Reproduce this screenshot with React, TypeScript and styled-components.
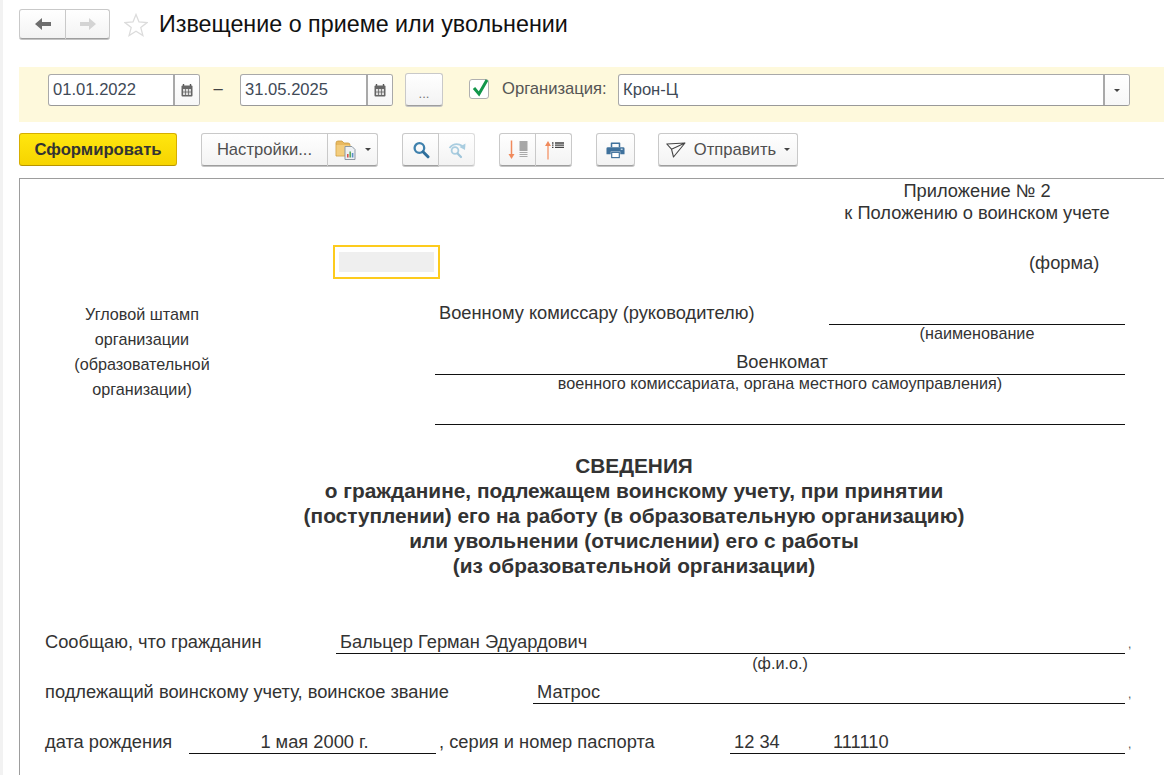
import { createGlobalStyle, styled } from "styled-components";

const GlobalStyle = createGlobalStyle`
  html, body {
    margin: 0;
    padding: 0;
    background: #fff;
  }
  body {
    font-family: "Liberation Sans", Arial, sans-serif;
  }
`;

const Page = styled.div`
  box-sizing: border-box;
  width: 1164px;
  height: 775px;
  overflow: hidden;
  border-left: 3px solid #f2f2f2;
  padding-left: 16px;
  background: #fff;
`;

const TitleBar = styled.header`
  display: flex;
  align-items: flex-start;
  height: 67px;
  padding-top: 9px;
  box-sizing: border-box;
`;

const ButtonFace = styled.button<{ $w: number; $joinLeft?: boolean; $joinRight?: boolean; $faded?: boolean }>`
  box-sizing: border-box;
  width: ${(p) => p.$w}px;
  height: 100%;
  padding: 0;
  display: flex;
  align-items: center;
  justify-content: center;
  font: inherit;
  color: #4a4a4a;
  background: linear-gradient(#fff, #f3f3f3);
  border: 1px solid ${(p) => (p.$faded ? "#dcdcdc" : "#c9c9c9")};
  border-bottom-color: ${(p) => (p.$faded ? "#c4c4c4" : "#9e9e9e")};
  border-left-width: ${(p) => (p.$joinLeft ? 0 : 1)}px;
  border-radius: ${(p) => (p.$joinLeft ? 0 : 3)}px ${(p) => (p.$joinRight ? 0 : 3)}px ${(p) => (p.$joinRight ? 0 : 3)}px ${(p) => (p.$joinLeft ? 0 : 3)}px;
  box-shadow: 0 1px 0 ${(p) => (p.$faded ? "#e2e2e2" : "#c4c4c4")};
`;

const Group = styled.div<{ $h?: number; $left?: number }>`
  display: flex;
  height: ${(p) => p.$h ?? 33}px;
  margin-left: ${(p) => p.$left ?? 0}px;
  flex: none;
`;

const StarSlot = styled.span`
  margin: 4px 11px 0 14px;
  display: flex;
`;

const Title = styled.h1`
  margin: 0;
  font-size: 23.3px;
  font-weight: 400;
  line-height: 31px;
  color: #111;
  white-space: nowrap;
`;

const FilterBar = styled.section`
  box-sizing: border-box;
  height: 55px;
  padding: 7px 0 0 29px;
  display: flex;
  align-items: flex-start;
  background: #fef9dc;
`;

const Field = styled.div<{ $w: number }>`
  box-sizing: border-box;
  width: ${(p) => p.$w}px;
  height: 32px;
  display: flex;
  flex: none;
  background: #fff;
  border: 1px solid #a9a9a9;
  border-bottom-color: #999;
  border-radius: 3px;
  overflow: hidden;
`;

const FieldText = styled.span`
  flex: 1;
  padding-left: 4px;
  font-size: 16.6px;
  line-height: 29px;
  color: #3f4a57;
  white-space: nowrap;
`;

const FieldButton = styled.span<{ $w: number }>`
  box-sizing: border-box;
  width: ${(p) => p.$w}px;
  display: flex;
  align-items: center;
  justify-content: center;
  border-left: 2px solid #a9a9a9;
  background: linear-gradient(#fff, #f7f7f7);
`;

const Dash = styled.span`
  box-sizing: border-box;
  width: 40px;
  padding-right: 4px;
  flex: none;
  text-align: center;
  font-size: 16.6px;
  line-height: 30px;
  color: #444;
`;

const EllipsisButton = styled.div`
  box-sizing: border-box;
  width: 38px;
  height: 33px;
  margin: -1px 0 0 12px;
  flex: none;
  padding-top: 10px;
  text-align: center;
  font-size: 13px;
  line-height: 20px;
  color: #777;
  background: linear-gradient(#fff, #f3f3f3);
  border: 1px solid #c9c9c9;
  border-bottom-color: #9e9e9e;
  border-radius: 3px;
  box-shadow: 0 1px 0 #c4c4c4;
`;

const CheckBox = styled.span`
  box-sizing: border-box;
  width: 20px;
  height: 20px;
  margin: 5px 0 0 26px;
  flex: none;
  position: relative;
  background: #fff;
  border: 1px solid #b0b0b0;
  border-radius: 3px;
`;

const CheckMark = styled.svg`
  position: absolute;
  left: 1px;
  top: -5px;
`;

const FilterLabel = styled.span`
  margin-left: 13px;
  width: 116px;
  flex: none;
  font-size: 16.6px;
  line-height: 29px;
  color: #555;
  white-space: nowrap;
`;

const ToolBar = styled.nav`
  display: flex;
  height: 33px;
  margin-top: 11px;
`;

const PrimaryButton = styled.button`
  box-sizing: border-box;
  width: 158px;
  height: 33px;
  padding: 0;
  flex: none;
  font: inherit;
  font-size: 16.7px;
  font-weight: 700;
  color: #333;
  background: linear-gradient(#ffe60f, #f6d400);
  border: 1px solid #d6ae00;
  border-bottom-color: #b79400;
  border-radius: 3px;
`;

const ButtonLabel = styled.span`
  font-size: 16.6px;
  color: #4f4f4f;
  white-space: nowrap;
`;

const Caret = styled.i`
  display: inline-block;
  width: 0;
  height: 0;
  border: 3px solid transparent;
  border-top: 3px solid #444;
  border-bottom: 0;
`;

const Doc = styled.main`
  margin-top: 12px;
  height: 597px;
  box-sizing: border-box;
  border-top: 1px solid #9d9d9d;
  border-left: 1px solid #9d9d9d;
  color: #333;
  font-size: 18.3px;
`;

const AppendixBlock = styled.div`
  width: 266px;
  margin: 1px 0 0 824px;
  text-align: center;
  line-height: 22px;
  white-space: nowrap;
`;

const StampRow = styled.div`
  display: flex;
  align-items: center;
  height: 34px;
  margin-top: 21px;
  padding-left: 313px;
`;

const StampCell = styled.div`
  box-sizing: border-box;
  width: 107px;
  height: 34px;
  padding: 5px 4px 5px 4px;
  flex: none;
  border: 2px solid #fdcb1d;
`;

const StampFill = styled.div`
  height: 100%;
  background: #efefef;
`;

const FormLabel = styled.span`
  margin: 2px 0 0 589px;
`;

const AddressGrid = styled.div`
  display: grid;
  grid-template-columns: 415px 690px;
  margin-top: 21px;
`;

const StampNote = styled.div`
  width: 244px;
  padding-top: 2px;
  text-align: center;
  font-size: 16.2px;
  line-height: 25px;
`;

const AddressRow = styled.div<{ $h: number; $rule?: boolean }>`
  display: flex;
  align-items: flex-end;
  justify-content: center;
  height: ${(p) => p.$h}px;
  box-sizing: border-box;
  padding: 0 0 1px 4px;
  border-bottom: ${(p) => (p.$rule ? "1px solid #111" : "0")};
  white-space: nowrap;
`;

const AddresseeRow = styled.div`
  display: flex;
  height: 25px;
  white-space: nowrap;
`;

const Addressee = styled.span`
  width: 394px;
  padding-left: 4px;
  box-sizing: border-box;
  flex: none;
  line-height: 26px;
`;

const AddresseeRule = styled.span`
  flex: 1;
  border-bottom: 1px solid #111;
`;

const HintLine = styled.div<{ $pad?: number }>`
  font-size: 16.2px;
  line-height: 17px;
  height: 17px;
  text-align: center;
  padding-left: ${(p) => p.$pad ?? 0}px;
  white-space: nowrap;
`;

const Heading = styled.h2`
  width: 800px;
  margin: 28px 0 0 214px;
  text-align: center;
  font-size: 20.84px;
  font-weight: 700;
  line-height: 25px;
  white-space: nowrap;
`;

const FormRow = styled.div<{ $top?: number; $h?: number }>`
  display: flex;
  align-items: flex-end;
  height: ${(p) => p.$h ?? 30}px;
  margin-top: ${(p) => p.$top ?? 0}px;
  padding-left: 25px;
  white-space: nowrap;
`;

const FormLabelText = styled.span<{ $w: number; $pad?: number }>`
  box-sizing: border-box;
  width: ${(p) => p.$w}px;
  padding-left: ${(p) => p.$pad ?? 0}px;
  flex: none;
  line-height: 24px;
`;

const Blank = styled.span<{ $w: number; $center?: boolean }>`
  box-sizing: border-box;
  width: ${(p) => p.$w}px;
  flex: none;
  height: 25px;
  padding-left: 4px;
  display: flex;
  justify-content: ${(p) => (p.$center ? "center" : "flex-start")};
  line-height: 26px;
  border-bottom: 1px solid #111;
`;

const Comma = styled.span`
  margin-left: 3px;
  font-size: 12px;
  line-height: 19px;
  color: #555;
`;

const NumberPart = styled.span<{ $w: number }>`
  width: ${(p) => p.$w}px;
  flex: none;
`;

const FioHint = styled.div`
  width: 112px;
  margin-left: 704px;
  height: 20px;
  text-align: center;
  font-size: 16.2px;
  line-height: 18px;
`;

const GapIcon = styled.span`
  display: flex;
  align-items: center;
  gap: 8px;
`;

function ArrowIcon({ dir, color }: { dir: "left" | "right"; color: string }) {
  return (
    <svg width="18" height="14" viewBox="0 0 18 14">
      <path
        transform={dir === "right" ? "translate(18 0) scale(-1 1)" : undefined}
        d="M1 7 L8 1 V5 H17 V9 H8 V13 Z"
        fill={color}
      />
    </svg>
  );
}

function StarIcon() {
  return (
    <svg width="24" height="24" viewBox="0 0 24 24">
      <path
        d="M12 1.5 L15 9 L23 9.6 L16.8 14.6 L18.9 22.5 L12 18.2 L5.1 22.5 L7.2 14.6 L1 9.6 L9 9 Z"
        fill="#fff"
        stroke="#dcdcdc"
        strokeWidth="1.3"
      />
    </svg>
  );
}

function CalendarIcon() {
  return (
    <svg width="12" height="13" viewBox="0 0 12 13">
      <path d="M2.5 0 V2 M9.5 0 V2" stroke="#555" strokeWidth="1.4" />
      <rect x="0.5" y="1.5" width="11" height="11" rx="1" fill="#666" />
      <rect x="2" y="5" width="8" height="6" fill="#ddd" />
      <path d="M4.5 5 V11 M7.5 5 V11 M2 8 H10" stroke="#666" strokeWidth="0.8" />
    </svg>
  );
}

function ReportFolderIcon() {
  return (
    <svg width="22" height="22" viewBox="0 0 22 22">
      <path d="M1 4 Q1 2 3 2 H7 L9 4 H13 Q15 4 15 6 V17 H1 Z" fill="#e9b95f" stroke="#c99a3e" strokeWidth="0.8" />
      <rect x="1.5" y="6" width="13" height="10.5" fill="#f3cd7e" />
      <path d="M10 7.5 H17 L20 10.5 V20.5 H10 Z" fill="#eef1f4" stroke="#8d98a3" strokeWidth="1" />
      <rect x="12" y="15" width="1.6" height="3.5" fill="#d9534f" />
      <rect x="14.4" y="12.5" width="1.6" height="6" fill="#5cab62" />
      <rect x="16.8" y="14" width="1.6" height="4.5" fill="#5b8fc9" />
    </svg>
  );
}

function SearchIcon() {
  return (
    <svg width="18" height="18" viewBox="0 0 18 18">
      <circle cx="7.4" cy="7" r="4.8" fill="none" stroke="#3f81ad" strokeWidth="2.3" />
      <path d="M11 10.8 L16 15.8" stroke="#2f6f9c" strokeWidth="3" strokeLinecap="round" />
    </svg>
  );
}

function SearchNextIcon() {
  return (
    <svg width="20" height="18" viewBox="0 0 20 18">
      <circle cx="8" cy="9.5" r="3.4" fill="none" stroke="#a9cde0" strokeWidth="1.8" />
      <path d="M10.6 12.4 L14 16" stroke="#9fc5da" strokeWidth="2.2" strokeLinecap="round" />
      <path d="M2.5 7 Q8 0.5 15.5 5" fill="none" stroke="#a9cde0" strokeWidth="1.8" />
      <path d="M18.5 2.5 L18 9 L12.5 6 Z" fill="#a9cde0" />
    </svg>
  );
}

function ExpandIcon() {
  return (
    <svg width="20" height="20" viewBox="0 0 20 20">
      <path d="M3.5 0.5 V15" stroke="#f08a5c" strokeWidth="1.5" />
      <path d="M0.5 14 H6.5 L3.5 19 Z" fill="#f08a5c" />
      <path d="M11.5 2 H19.5 M11.5 4 H19.5 M11.5 6 H19.5 M11.5 8 H19.5 M11.5 10 H19.5" stroke="#555" strokeWidth="1.1" />
      <path d="M11.5 12.5 H19.5 M11.5 14.5 H19.5 M11.5 16.5 H19.5" stroke="#aaa" strokeWidth="1.1" />
    </svg>
  );
}

function CollapseIcon() {
  return (
    <svg width="20" height="20" viewBox="0 0 20 20">
      <path d="M4 5 V19.5" stroke="#f5a07a" strokeWidth="1.5" />
      <path d="M1 6 H7 L4 1 Z" fill="#f08a5c" />
      <path d="M8 3 H9.5 M11 3 H20 M8 5.2 H9.5 M11 5.2 H20 M8 7.4 H9.5 M11 7.4 H20" stroke="#444" strokeWidth="1.3" />
    </svg>
  );
}

function PrinterIcon() {
  return (
    <svg width="19" height="18" viewBox="0 0 20 18">
      <path d="M5 6 V1.5 Q5 1 5.5 1 H14.5 Q15 1 15 1.5 V6 H13.4 V2.6 H6.6 V6 Z" fill="#3f719c" />
      <path d="M2 6 H18 Q19.5 6 19.5 7.5 V13.5 H15 V10.5 H5 V13.5 H0.5 V7.5 Q0.5 6 2 6 Z" fill="#3f719c" />
      <rect x="6" y="11.5" width="8" height="5.5" fill="#fff" stroke="#3f719c" strokeWidth="1.2" />
      <rect x="15.5" y="7.5" width="2" height="1.4" fill="#cfe0ec" />
    </svg>
  );
}

function SendIcon() {
  return (
    <svg width="20" height="16" viewBox="0 0 20 16">
      <path d="M0.8 2 L19 1 L7.5 15 L5.5 7.2 Z M5.5 7.2 L19 1" fill="none" stroke="#444" strokeWidth="1.1" strokeLinejoin="round" />
    </svg>
  );
}

export default function App() {
  return (
    <>
      <GlobalStyle />
      <Page>
        <TitleBar>
          <Group $h={30}>
            <ButtonFace $w={47} $joinRight>
              <ArrowIcon dir="left" color="#6e6e6e" />
            </ButtonFace>
            <ButtonFace $w={44} $joinLeft>
              <ArrowIcon dir="right" color="#d4d4d4" />
            </ButtonFace>
          </Group>
          <StarSlot>
            <StarIcon />
          </StarSlot>
          <Title>Извещение о приеме или увольнении</Title>
        </TitleBar>

        <FilterBar>
          <Field $w={152}>
            <FieldText>01.01.2022</FieldText>
            <FieldButton $w={26}>
              <CalendarIcon />
            </FieldButton>
          </Field>
          <Dash>–</Dash>
          <Field $w={153}>
            <FieldText>31.05.2025</FieldText>
            <FieldButton $w={26}>
              <CalendarIcon />
            </FieldButton>
          </Field>
          <EllipsisButton>...</EllipsisButton>
          <CheckBox>
            <CheckMark width="20" height="24" viewBox="0 0 20 24">
              <path d="M3 13 L8 19 L16 5" fill="none" stroke="#12964a" strokeWidth="3" />
            </CheckMark>
          </CheckBox>
          <FilterLabel>Организация:</FilterLabel>
          <Field $w={512}>
            <FieldText>Крон-Ц</FieldText>
            <FieldButton $w={26}>
              <Caret />
            </FieldButton>
          </Field>
        </FilterBar>

        <ToolBar>
          <PrimaryButton>Сформировать</PrimaryButton>
          <Group $left={24}>
            <ButtonFace $w={127} $joinRight>
              <ButtonLabel>Настройки...</ButtonLabel>
            </ButtonFace>
            <ButtonFace $w={50} $joinLeft>
              <GapIcon>
                <ReportFolderIcon />
                <Caret />
              </GapIcon>
            </ButtonFace>
          </Group>
          <Group $left={24}>
            <ButtonFace $w={37} $joinRight>
              <SearchIcon />
            </ButtonFace>
            <ButtonFace $w={36} $joinLeft $faded>
              <SearchNextIcon />
            </ButtonFace>
          </Group>
          <Group $left={24}>
            <ButtonFace $w={37} $joinRight>
              <ExpandIcon />
            </ButtonFace>
            <ButtonFace $w={36} $joinLeft>
              <CollapseIcon />
            </ButtonFace>
          </Group>
          <Group $left={24}>
            <ButtonFace $w={39}>
              <PrinterIcon />
            </ButtonFace>
          </Group>
          <Group $left={23}>
            <ButtonFace $w={140}>
              <GapIcon>
                <SendIcon />
                <ButtonLabel>Отправить</ButtonLabel>
                <Caret />
              </GapIcon>
            </ButtonFace>
          </Group>
        </ToolBar>

        <Doc>
          <AppendixBlock>
            Приложение № 2
            <br />к Положению о воинском учете
          </AppendixBlock>
          <StampRow>
            <StampCell>
              <StampFill />
            </StampCell>
            <FormLabel>(форма)</FormLabel>
          </StampRow>
          <AddressGrid>
            <StampNote>
              Угловой штамп
              <br />
              организации
              <br />
              (образовательной
              <br />
              организации)
            </StampNote>
            <div>
              <AddresseeRow>
                <Addressee>Военному комиссару (руководителю)</Addressee>
                <AddresseeRule />
              </AddresseeRow>
              <HintLine $pad={394}>(наименование</HintLine>
              <AddressRow $h={33} $rule>Военкомат</AddressRow>
              <HintLine>военного комиссариата, органа местного самоуправления)</HintLine>
              <AddressRow $h={33} $rule />
            </div>
          </AddressGrid>
          <Heading>
            СВЕДЕНИЯ
            <br />о гражданине, подлежащем воинскому учету, при принятии
            <br />(поступлении) его на работу (в образовательную организацию)
            <br />или увольнении (отчислении) его с работы
            <br />(из образовательной организации)
          </Heading>
          <FormRow $top={46}>
            <FormLabelText $w={291}>Сообщаю, что гражданин</FormLabelText>
            <Blank $w={789}>Бальцер Герман Эдуардович</Blank>
            <Comma>,</Comma>
          </FormRow>
          <FioHint>(ф.и.о.)</FioHint>
          <FormRow>
            <FormLabelText $w={488}>подлежащий воинскому учету, воинское звание</FormLabelText>
            <Blank $w={592}>Матрос</Blank>
            <Comma>,</Comma>
          </FormRow>
          <FormRow $top={20}>
            <FormLabelText $w={144}>дата рождения</FormLabelText>
            <Blank $w={247} $center>1 мая 2000 г.</Blank>
            <FormLabelText $w={294} $pad={3}>, серия и номер паспорта</FormLabelText>
            <Blank $w={395}>
              <NumberPart $w={99}>12 34</NumberPart>
              <span>111110</span>
            </Blank>
            <Comma>,</Comma>
          </FormRow>
        </Doc>
      </Page>
    </>
  );
}
